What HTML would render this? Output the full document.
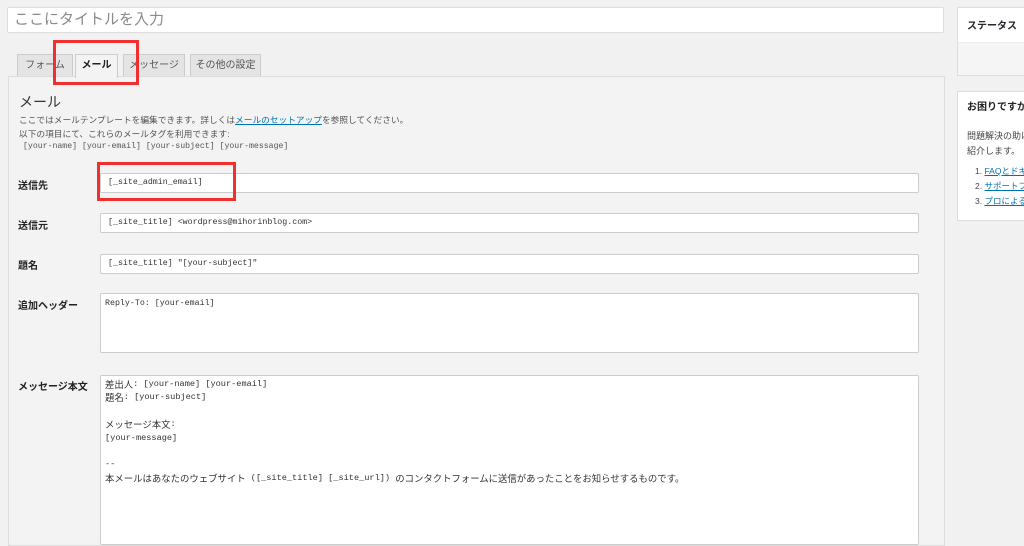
<!DOCTYPE html>
<html><head><meta charset="utf-8"><style>
*{box-sizing:border-box;margin:0;padding:0}
body{width:1024px;height:538px;overflow:hidden;background:#f1f1f1;font-family:"Liberation Sans","Noto Sans CJK JP",sans-serif;color:#23282d;position:relative;font-size:10px}
.abs{position:absolute}
.title{left:7px;top:7px;width:937px;height:26px;background:#fff;border:1px solid #ddd;border-radius:2px;font-size:15px;color:#8a8a8a;padding:2px 6px;line-height:20px}
.tab{top:54px;height:23px;background:#e4e4e4;border:1px solid #ccc;border-bottom:none;font-size:10px;color:#555;text-align:center;line-height:21px}
.tab.on{background:#f3f3f3;color:#222;font-weight:bold;height:24px;z-index:2}
.panel{left:8px;top:76px;width:937px;height:470px;background:#f3f3f3;border:1px solid #ddd}
.lbl{left:18px;font-size:10px;font-weight:bold;color:#222}
.in{left:100px;width:819px;height:20px;background:#fff;border:1px solid #ccc;border-radius:2px;font-family:"Liberation Mono","Noto Sans CJK JP",monospace;font-size:8.3px;color:#333;padding:0 7px;line-height:18px}
.ta{line-height:13.4px;padding:2px 4px;white-space:pre}
.j{font-size:9.4px;line-height:13.4px;vertical-align:top;font-family:"Liberation Sans","Noto Sans CJK JP",sans-serif}
.red{border:3px solid #f03030;z-index:5}
.box{left:957px;width:200px;background:#fff;border:1px solid #ddd;white-space:nowrap}
a{color:#0073aa;text-decoration:underline}
</style></head><body>
<div class="abs title">ここにタイトルを入力</div>
<div class="abs tab" style="left:17px;width:56px">フォーム</div>
<div class="abs tab on" style="left:75px;width:43px">メール</div>
<div class="abs tab" style="left:123px;width:62px">メッセージ</div>
<div class="abs tab" style="left:190px;width:71px">その他の設定</div>
<div class="abs panel"></div>
<div class="abs" style="left:19px;top:92px;font-size:14px;color:#333">メール</div>
<div class="abs" style="left:19px;top:114px;font-size:8.7px;color:#555;line-height:13.5px">ここではメールテンプレートを編集できます。詳しくは<a>メールのセットアップ</a>を参照してください。<br>以下の項目にて、これらのメールタグを利用できます:</div>
<div class="abs" style="left:23px;top:142px;font-size:8.2px;color:#555;font-family:'Liberation Mono',monospace">[your-name] [your-email] [your-subject] [your-message]</div>

<div class="abs lbl" style="top:177px">送信先</div>
<div class="abs in" style="top:173px">[_site_admin_email]</div>
<div class="abs lbl" style="top:217px">送信元</div>
<div class="abs in" style="top:213px">[_site_title] &lt;wordpress@mihorinblog.com&gt;</div>
<div class="abs lbl" style="top:257px">題名</div>
<div class="abs in" style="top:254px">[_site_title] "[your-subject]"</div>
<div class="abs lbl" style="top:297px">追加ヘッダー</div>
<div class="abs in ta" style="top:293px;height:60px;padding-top:3px">Reply-To: [your-email]</div>
<div class="abs lbl" style="top:378px">メッセージ本文</div>
<div class="abs in ta" style="top:375px;height:170px;font-size:8.6px"><span class="j">差出人</span>: [your-name] [your-email]
<span class="j">題名</span>: [your-subject]

<span class="j">メッセージ本文</span>:
[your-message]

--
<span class="j">本メールはあなたのウェブサイト</span> ([_site_title] [_site_url]) <span class="j">のコンタクトフォームに送信があったことをお知らせするものです。</span></div>

<div class="abs red" style="left:53px;top:40px;width:86px;height:45px"></div>
<div class="abs red" style="left:97px;top:162px;width:139px;height:39px"></div>

<div class="abs box" style="top:7px;height:69px;background:#f5f5f5">
<div style="background:#fff;height:35px;border-bottom:1px solid #eee;padding:9px 9px;font-size:10px;font-weight:bold">ステータス</div></div>
<div class="abs box" style="top:91px;height:130px;padding:6px 9px;font-size:9px;color:#444">
<div style="font-weight:bold;color:#222;font-size:10px">お困りですか？</div>
<div style="margin-top:16px;line-height:15px">問題解決の助けになるよう<br>紹介します。</div>
<div style="margin-top:5px;line-height:15px;padding-left:8px;font-size:8.5px">1. <a>FAQとドキュメント</a><br>2. <a>サポートフォーラム</a><br>3. <a>プロによるサービス</a></div>
</div>
</body></html>
